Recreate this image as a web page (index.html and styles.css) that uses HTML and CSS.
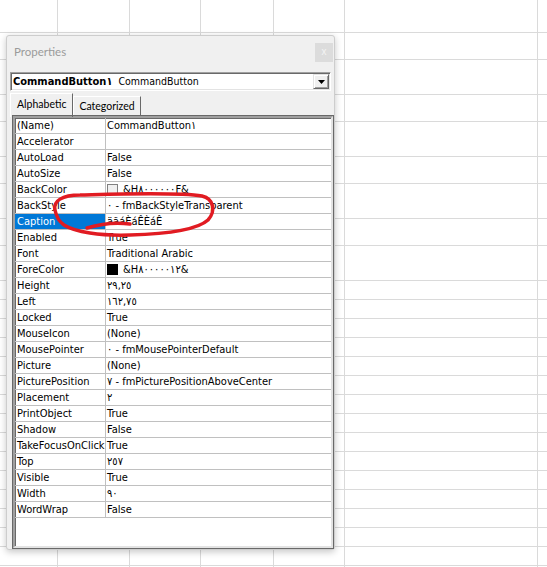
FILE: index.html
```html
<!DOCTYPE html>
<html lang="en">
<head>
    <meta charset="UTF-8">
    <title>Properties</title>
    <link rel="stylesheet" href="styles.css">
</head>
<body>
    <div class="sheet">
        <div class="sheet-row h33"></div>
        <div class="sheet-row h27"></div>
        <div class="sheet-row h35"></div>
        <div class="sheet-row h27"></div>
        <div class="sheet-row h35"></div>
        <div class="sheet-row h27"></div>
        <div class="sheet-row h35"></div>
        <div class="sheet-row h27"></div>
        <div class="sheet-row h35"></div>
        <div class="sheet-row"></div>
        <div class="sheet-row"></div>
        <div class="sheet-row"></div>
        <div class="sheet-row"></div>
        <div class="sheet-row"></div>
        <div class="sheet-row"></div>
        <div class="sheet-row"></div>
        <div class="sheet-row"></div>
        <div class="sheet-row"></div>
        <div class="sheet-row"></div>
        <div class="sheet-row"></div>
        <div class="sheet-row"></div>
        <div class="sheet-row"></div>
        <div class="sheet-row"></div>
        <div class="sheet-row"></div>
    </div>

    <div class="props">
        <div class="titlebar">
            <span class="title">Properties</span>
            <span class="close">x</span>
        </div>

        <div class="combo">
            <span class="combo-text"><b>CommandButton١</b> CommandButton</span>
            <span class="combo-btn">
                <svg width="7" height="4" viewBox="0 0 7 4"><path d="M0 0H7L3.5 4Z" fill="#000"/></svg>
            </span>
        </div>

        <div class="tabs">
            <span class="tab active">Alphabetic</span>
            <span class="tab">Categorized</span>
        </div>

        <div class="grid">
            <div class="row"><span class="key">(Name)</span><span class="val">CommandButton١</span></div>
            <div class="row"><span class="key">Accelerator</span><span class="val"></span></div>
            <div class="row"><span class="key">AutoLoad</span><span class="val">False</span></div>
            <div class="row"><span class="key">AutoSize</span><span class="val">False</span></div>
            <div class="row"><span class="key">BackColor</span><span class="val"><i class="swatch"></i>&amp;H٨٠٠٠٠٠٠F&amp;</span></div>
            <div class="row"><span class="key">BackStyle</span><span class="val">٠ - fmBackStyleTransparent</span></div>
            <div class="row selected"><span class="key">Caption</span><span class="val">äãáÈáÊÈáÊ</span></div>
            <div class="row"><span class="key">Enabled</span><span class="val">True</span></div>
            <div class="row"><span class="key">Font</span><span class="val">Traditional Arabic</span></div>
            <div class="row"><span class="key">ForeColor</span><span class="val"><i class="swatch black"></i>&amp;H٨٠٠٠٠٠١٢&amp;</span></div>
            <div class="row"><span class="key">Height</span><span class="val">٢٩,٢٥</span></div>
            <div class="row"><span class="key">Left</span><span class="val">١٦٢,٧٥</span></div>
            <div class="row"><span class="key">Locked</span><span class="val">True</span></div>
            <div class="row"><span class="key">MouseIcon</span><span class="val">(None)</span></div>
            <div class="row"><span class="key">MousePointer</span><span class="val">٠ - fmMousePointerDefault</span></div>
            <div class="row"><span class="key">Picture</span><span class="val">(None)</span></div>
            <div class="row"><span class="key">PicturePosition</span><span class="val">٧ - fmPicturePositionAboveCenter</span></div>
            <div class="row"><span class="key">Placement</span><span class="val">٢</span></div>
            <div class="row"><span class="key">PrintObject</span><span class="val">True</span></div>
            <div class="row"><span class="key">Shadow</span><span class="val">False</span></div>
            <div class="row"><span class="key">TakeFocusOnClick</span><span class="val">True</span></div>
            <div class="row"><span class="key">Top</span><span class="val">٢٥٧</span></div>
            <div class="row"><span class="key">Visible</span><span class="val">True</span></div>
            <div class="row"><span class="key">Width</span><span class="val">٩٠</span></div>
            <div class="row"><span class="key">WordWrap</span><span class="val">False</span></div>
        </div>
    </div>

    <!-- red marker scribble drawn on top of the screenshot -->
    <svg class="mark" width="547" height="567" viewBox="0 0 547 567">
        <path d="M55 210C53 201 62 195 80 195C120 194 178 192 202 196C214 199 216 211 208 220C197 230 165 234 130 235C100 236 75 232 64 225C58 221 56 215 55 210"
              fill="none" stroke="#e11b22" stroke-width="3.5" stroke-linecap="round"/>
        <path d="M87 228C100 224 115 222 130 224" fill="none" stroke="#e11b22" stroke-width="3.5" stroke-linecap="round"/>
    </svg>
</body>
</html>
```

FILE: styles.css
```css
body {
    margin: 0;
    width: 547px;
    height: 567px;
    overflow: hidden;
    background: #fff;
    font-family: "DejaVu Sans Condensed", "DejaVu Sans", sans-serif;
    font-stretch: condensed;
    font-size: 11px;
    color: #000;
}

/* spreadsheet behind the window */
.sheet {
    display: flex;
    flex-direction: column;
    height: 567px;
    background-image:
        linear-gradient(#dadada, #dadada),
        linear-gradient(#dadada, #dadada),
        linear-gradient(#dadada, #dadada),
        linear-gradient(#dadada, #dadada),
        linear-gradient(#dadada, #dadada),
        linear-gradient(#dadada, #dadada);
    background-size: 1px 100%;
    background-repeat: no-repeat;
    background-position: 57px 0, 129px 0, 200px 0, 273px 0, 344px 0, 537px 0;
}
.sheet-row {
    flex: none;
    height: 19px;
    box-sizing: border-box;
    border-bottom: 1px solid #dadada;
}
.h33 { height: 33px; }
.h27 { height: 27px; }
.h35 { height: 35px; }

/* properties window */
.props {
    position: absolute;
    left: 6px;
    top: 35px;
    width: 329px;
    height: 515px;
    box-sizing: border-box;
    background: #f0f0f0;
    border: 1px solid #cdcdcd;
    border-radius: 3px;
    box-shadow: 0 2px 7px rgba(0, 0, 0, 0.22);
}
.titlebar {
    height: 36px;
    display: flex;
    justify-content: space-between;
    align-items: flex-start;
    padding: 0 1px 0 7px;
}
.title {
    margin-top: 8px;
    font-family: Lato, "Open Sans", sans-serif;
    font-size: 11.5px;
    line-height: 16px;
    color: #9b9b9b;
}
.close {
    margin-top: 7px;
    width: 18px;
    height: 19px;
    background: #dcdcdc;
    color: #f4f4f4;
    font-family: "Liberation Sans", sans-serif;
    font-size: 10px;
    line-height: 18px;
    text-align: center;
}

.combo {
    display: flex;
    align-items: center;
    justify-content: space-between;
    width: 321px;
    height: 19px;
    margin-left: 3px;
    box-sizing: border-box;
    background: #fff;
    border: 1px solid;
    border-color: #a0a0a0 #fff #fff #a0a0a0;
    box-shadow: inset 1px 1px #696969, inset -1px -1px #e3e3e3;
    padding: 1px;
}
.combo-text {
    padding-left: 1px;
    font-size: 10.5px;
    line-height: 15px;
    white-space: nowrap;
}
.combo-text b {
    font-size: 11px;
    margin-right: 3px;
}
.combo-btn {
    display: flex;
    align-items: center;
    justify-content: center;
    width: 16px;
    height: 15px;
    box-sizing: border-box;
    background: #f0f0f0;
    border: 1px solid;
    border-color: #e3e3e3 #696969 #696969 #e3e3e3;
    box-shadow: inset 1px 1px #fff, inset -1px -1px #a0a0a0;
}

.tabs {
    display: flex;
    align-items: flex-end;
    height: 22px;
    margin: 3px 0 0 3px;
    font-family: Lato, "Open Sans", sans-serif;
    font-size: 10.5px;
}
.tab {
    height: 19px;
    line-height: 18px;
    padding: 0 5px 0 5px;
    box-sizing: border-box;
    border: 1px solid;
    border-color: #fff #696969 transparent #fff;
    border-bottom: none;
    margin-bottom: 1px;
}
.tab.active {
    height: 24px;
    line-height: 20px;
    padding: 0 6px 0 6px;
    margin-bottom: -1px;
    position: relative;
}

.grid {
    width: 320px;
    height: 432px;
    margin-left: 6px;
    box-sizing: border-box;
    background: #fff;
    border: 2px solid;
    border-color: #a0a0a0 #e3e3e3 #e3e3e3 #a0a0a0;
    box-shadow: inset 1px 1px #696969, 0 0 0 1px #696969;
}
.row {
    display: flex;
    height: 16px;
    box-sizing: border-box;
    border-bottom: 1px solid #c0c0c0;
    line-height: 15px;
    white-space: nowrap;
}
.key {
    width: 91px;
    flex: none;
    padding-left: 2px;
    box-sizing: border-box;
    border-right: 1px solid #c0c0c0;
    overflow: hidden;
}
.val {
    display: flex;
    align-items: center;
    padding-left: 1px;
}
.row.selected .key {
    background: #0078d7;
    color: #fff;
}
.swatch {
    width: 11px;
    height: 11px;
    margin-right: 5px;
    box-sizing: border-box;
    border: 1px solid #808080;
    background: #f0f0f0;
}
.swatch.black {
    background: #000;
    border-color: #000;
}

.mark {
    position: absolute;
    left: 0;
    top: 0;
    pointer-events: none;
}
```
